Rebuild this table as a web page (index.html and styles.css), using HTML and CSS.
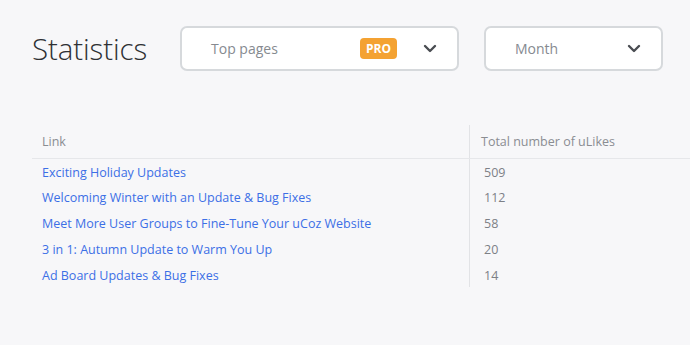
FILE: index.html
```html
<!DOCTYPE html>
<html>
<head>
<meta charset="utf-8">
<link rel="stylesheet" href="styles.css">
</head>
<body>
<div class="page">
  <header class="top">
    <h1 class="title">Statistics</h1>
    <div class="select select-pages">
      <span class="select-label">Top pages</span>
      <span class="pro">PRO</span>
      <svg class="chev" width="14" height="9" viewBox="0 0 14 9"><path d="M2 2l5 5 5-5" fill="none" stroke="#4a4d52" stroke-width="2.4" stroke-linecap="round" stroke-linejoin="round"/></svg>
    </div>
    <div class="select select-month">
      <span class="select-label">Month</span>
      <svg class="chev" width="14" height="9" viewBox="0 0 14 9"><path d="M2 2l5 5 5-5" fill="none" stroke="#4a4d52" stroke-width="2.4" stroke-linecap="round" stroke-linejoin="round"/></svg>
    </div>
  </header>
  <table class="stats">
    <thead>
      <tr><th class="c-link">Link</th><th class="c-num">Total number of uLikes</th></tr>
    </thead>
    <tbody>
      <tr><td class="c-link"><a href="#">Exciting Holiday Updates</a></td><td class="c-num">509</td></tr>
      <tr><td class="c-link"><a href="#">Welcoming Winter with an Update &amp; Bug Fixes</a></td><td class="c-num">112</td></tr>
      <tr><td class="c-link"><a href="#">Meet More User Groups to Fine-Tune Your uCoz Website</a></td><td class="c-num">58</td></tr>
      <tr><td class="c-link"><a href="#">3 in 1: Autumn Update to Warm You Up</a></td><td class="c-num">20</td></tr>
      <tr><td class="c-link"><a href="#">Ad Board Updates &amp; Bug Fixes</a></td><td class="c-num">14</td></tr>
    </tbody>
  </table>
</div>
</body>
</html>
```

FILE: styles.css
```css
html, body {
  margin: 0;
  padding: 0;
  background: #f7f7f9;
  font-family: "Open Sans", "Noto Sans", sans-serif;
}
.page {
  width: 690px;
  height: 345px;
  overflow: hidden;
}
.top {
  display: flex;
  align-items: center;
  padding: 26px 0 0 32px;
  height: 45px;
}
.title {
  margin: 0;
  font-size: 29.5px;
  font-weight: 300;
  color: #2e3034;
  width: 148px;
  letter-spacing: -0.1px;
}
.select {
  box-sizing: border-box;
  height: 45px;
  background: #fff;
  border: 2px solid #d6d9dc;
  border-radius: 7px;
  display: flex;
  align-items: center;
  padding: 0 20px 0 29px;
}
.select-pages {
  width: 279px;
  margin-right: 25px;
}
.select-month {
  width: 179px;
}
.select-label {
  font-size: 14px;
  color: #868a90;
  flex: 1;
}
.pro {
  background: #f4a232;
  color: #fff;
  font-size: 12px;
  font-weight: 700;
  border-radius: 4px;
  width: 37px;
  height: 21px;
  line-height: 21px;
  text-align: center;
  margin-right: 26px;
}
.chev {
  display: block;
}
.stats {
  margin: 54px 0 0 32px;
  border-collapse: collapse;
  width: 658px;
  font-size: 12.5px;
}
.stats th {
  font-weight: 400;
  color: #8a8d92;
  text-align: left;
  height: 33px;
  padding: 0;
  border-bottom: 1px solid #e6e7ea;
}
.stats td {
  height: 25.8px;
  padding: 2px 0 0;
  box-sizing: border-box;
  line-height: 16px;
}
.stats .c-link {
  width: 427px;
  padding-left: 10px;
  border-right: 1px solid #e2e3e6;
}
.stats th.c-num {
  padding-left: 11px;
}
.stats td.c-num {
  padding-left: 14px;
  color: #7d8086;
}
.stats a {
  color: #3c6fe6;
  text-decoration: none;
}
```
